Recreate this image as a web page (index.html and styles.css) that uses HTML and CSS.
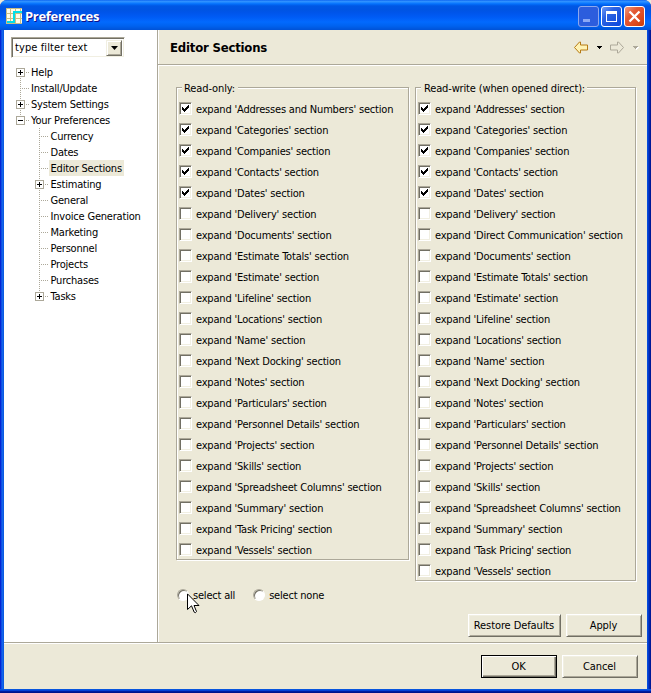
FILE: index.html
```
<!DOCTYPE html>
<html lang="en">
<head>
<meta charset="utf-8">
<title>Preferences</title>
<link rel="stylesheet" href="styles.css">
</head>
<body>
<svg class="defs" width="0" height="0" aria-hidden="true">
  <symbol id="check" viewBox="0 0 7 7"><path d="M0 2h1v1h1v1h1V3h1V2h1V1h1V0h1v3H6v1H5v1H4v1H3v1H2V6H1V5H0z"/></symbol>
  <symbol id="arrow" viewBox="0 0 14 13"><path d="M.5 6.500 5.500 1H6.500V4H13.500V9H6.500V12H5.500Z"/></symbol>
</svg>
<div class="window">
  <header class="titlebar">
    <svg class="appicon" width="16" height="16" viewBox="0 0 16 16" shape-rendering="crispEdges"><path fill="#fffce8" d="M0 0h16v16H0z"/><path fill="none" stroke="#c9bd84" d="M.5 0v16M4.500 0v16M9.500 0v16M14.500 0v16M0 .5h16M0 5.500h16M0 10.500h16M0 15.500h16"/><path fill="none" stroke="#00dfe8" stroke-width="2" d="M1 14h7V4h8"/></svg>
    <h1>Preferences</h1>
    <div class="caption">
      <span class="cap min"><svg width="21" height="21"><path fill="#8ca9f5" d="M5 13h7v3H5z"/></svg></span>
      <span class="cap max"><svg width="21" height="21"><path fill="#fff" fill-rule="evenodd" d="M5 5h11v11H5zM6 8v7h9V8z"/></svg></span>
      <span class="cap close"><svg width="21" height="21"><path stroke="#fff" stroke-width="2.300" d="m5.500 5.500 10 10m0-10-10 10"/></svg></span>
    </div>
  </header>
  <main class="body">
    <nav class="side">
      <div class="combo"><span>type filter text</span><b class="drop"><svg width="7" height="4"><path d="M0 0h7L3.500 4z"/></svg></b></div>
      <ul class="tree">
        <li class="plus"><span>Help</span></li>
        <li><span>Install/Update</span></li>
        <li class="plus"><span>System Settings</span></li>
        <li class="minus last"><span>Your Preferences</span>
          <ul>
            <li><span>Currency</span></li>
            <li><span>Dates</span></li>
            <li><span class="selected">Editor Sections</span></li>
            <li class="plus"><span>Estimating</span></li>
            <li><span>General</span></li>
            <li><span>Invoice Generation</span></li>
            <li><span>Marketing</span></li>
            <li><span>Personnel</span></li>
            <li><span>Projects</span></li>
            <li><span>Purchases</span></li>
            <li class="plus last"><span>Tasks</span></li>
          </ul>
        </li>
      </ul>
    </nav>
    <section class="page">
      <div class="pagehead">
        <h2>Editor Sections</h2>
        <div class="history">
          <svg class="back" width="14" height="13"><use href="#arrow"/></svg>
          <svg class="caret" width="5" height="3"><path d="M0 0h5v1H4v1H3v1H2V2H1V1H0z"/></svg>
          <svg class="forward" width="14" height="13"><use href="#arrow"/></svg>
          <svg class="caret off" width="6" height="4"><path fill="#fff" d="M1 1h5v1H5v1H4v1H3V3H2V2H1z"/><path d="M0 0h5v1H4v1H3v1H2V2H1V1H0z"/></svg>
        </div>
      </div>
      <div class="groups">
        <div class="group first">
          <h3>Read-only:</h3>
          <label><i><svg><use href="#check"/></svg></i>expand 'Addresses and Numbers' section</label>
          <label><i><svg><use href="#check"/></svg></i>expand 'Categories' section</label>
          <label><i><svg><use href="#check"/></svg></i>expand 'Companies' section</label>
          <label><i><svg><use href="#check"/></svg></i>expand 'Contacts' section</label>
          <label><i><svg><use href="#check"/></svg></i>expand 'Dates' section</label>
          <label><i></i>expand 'Delivery' section</label>
          <label><i></i>expand 'Documents' section</label>
          <label><i></i>expand 'Estimate Totals' section</label>
          <label><i></i>expand 'Estimate' section</label>
          <label><i></i>expand 'Lifeline' section</label>
          <label><i></i>expand 'Locations' section</label>
          <label><i></i>expand 'Name' section</label>
          <label><i></i>expand 'Next Docking' section</label>
          <label><i></i>expand 'Notes' section</label>
          <label><i></i>expand 'Particulars' section</label>
          <label><i></i>expand 'Personnel Details' section</label>
          <label><i></i>expand 'Projects' section</label>
          <label><i></i>expand 'Skills' section</label>
          <label><i></i>expand 'Spreadsheet Columns' section</label>
          <label><i></i>expand 'Summary' section</label>
          <label><i></i>expand 'Task Pricing' section</label>
          <label><i></i>expand 'Vessels' section</label>
        </div>
        <div class="group second">
          <h3>Read-write (when opened direct):</h3>
          <label><i><svg><use href="#check"/></svg></i>expand 'Addresses' section</label>
          <label><i><svg><use href="#check"/></svg></i>expand 'Categories' section</label>
          <label><i><svg><use href="#check"/></svg></i>expand 'Companies' section</label>
          <label><i><svg><use href="#check"/></svg></i>expand 'Contacts' section</label>
          <label><i><svg><use href="#check"/></svg></i>expand 'Dates' section</label>
          <label><i></i>expand 'Delivery' section</label>
          <label><i></i>expand 'Direct Communication' section</label>
          <label><i></i>expand 'Documents' section</label>
          <label><i></i>expand 'Estimate Totals' section</label>
          <label><i></i>expand 'Estimate' section</label>
          <label><i></i>expand 'Lifeline' section</label>
          <label><i></i>expand 'Locations' section</label>
          <label><i></i>expand 'Name' section</label>
          <label><i></i>expand 'Next Docking' section</label>
          <label><i></i>expand 'Notes' section</label>
          <label><i></i>expand 'Particulars' section</label>
          <label><i></i>expand 'Personnel Details' section</label>
          <label><i></i>expand 'Projects' section</label>
          <label><i></i>expand 'Skills' section</label>
          <label><i></i>expand 'Spreadsheet Columns' section</label>
          <label><i></i>expand 'Summary' section</label>
          <label><i></i>expand 'Task Pricing' section</label>
          <label><i></i>expand 'Vessels' section</label>
        </div>
      </div>
      <div class="radios">
        <label class="all"><i></i>select all
          <svg class="pointer" width="13" height="21" viewBox="0 0 13 21"><path fill="#fff" stroke="#000" d="M.5.900V16.500L4.500 12.800 7.200 19.200Q8.500 20.500 9.500 18.500L7 12.500H12Z"/></svg>
        </label>
        <label><i></i>select none</label>
      </div>
      <div class="pagebuttons"><button class="wide">Restore Defaults</button><button>Apply</button></div>
    </section>
  </main>
  <footer><button class="default">OK</button><button>Cancel</button></footer>
</div>
</body>
</html>
```

FILE: styles.css
```
*, *::before, *::after { box-sizing: border-box; }
body { margin: 0; background: #ece9d8; color: #000; font: 11px/16px "DejaVu Sans Condensed", "DejaVu Sans", sans-serif; font-stretch: condensed; letter-spacing: -0.2px; }
h1, h2, h3, ul { margin: 0; padding: 0; }
svg { display: block; }
.defs { position: absolute; }
.window { width: 651px; height: 693px; display: flex; flex-direction: column; padding: 0 4px 4px; border-radius: 7px 7px 0 0; background: linear-gradient(90deg, #0019cf 0, #0831d9 1px, #166aee 2px, #0855dd 4px, #0855dd 647px, #0441d8 648px, #001da0 650px, #00138c 651px); overflow: hidden; box-shadow: inset 0 -1px #00138c, inset 0 -2px #001da0, inset 0 -3px #0441d8, inset 0 -4px #0855dd; }
.titlebar { height: 30px; flex: none; display: flex; align-items: flex-start; margin: 0 -4px; padding: 6px 6px 0 6px; background: linear-gradient(#0058ee 0, #3593ff 1px, #288eff 2px, #127dff 3px, #036ffc 4px, #0262ee 5px, #0057e5 6px, #0054e3 10px, #0055eb 13px, #005bf5 17px, #026afe 22px, #0062ef 26px, #0052d6 30px); }
.appicon { margin: 2px 3px 0 0; }
h1 { color: #fff; font: bold 13px/21px "Open Sans", sans-serif; letter-spacing: -0.3px; text-shadow: 1px 1px #0f1089; }
.caption { margin-left: auto; display: flex; gap: 2px; }
.cap { width: 21px; height: 21px; border: 1px solid #fff; border-radius: 3px; background: linear-gradient(135deg, #6f9af5 0%, #2c63e4 35%, #1c55dd 65%, #0a49e0 100%); }
.cap svg { margin: -1px; }
.cap.min { border-color: #8da8ed; background: #2c5ddd; }
.cap.close { background: linear-gradient(135deg, #f09a80 0%, #e35a35 35%, #e04c22 65%, #c83c08 100%); }
.body { height: 612px; flex: none; display: flex; }
.side { width: 154px; background: #fff; padding: 7px 0 0 7px; }
.combo { width: 114px; height: 21px; display: flex; justify-content: space-between; border: 1px solid; border-color: #aca899 #fff #fff #aca899; box-shadow: inset 1px 1px #716f64, inset -1px -1px #f1efe2; padding: 1px 2px 2px 3px; letter-spacing: 0.1px; }
.combo span { padding-top: 1px; }
.drop { width: 16px; height: 16px; margin-top: 1px; display: grid; place-items: center; background: #ece9d8; border: 1px solid; border-color: #f1efe2 #716f64 #716f64 #f1efe2; box-shadow: inset 1px 1px #fff, inset -1px -1px #aca899; }
.tree { margin-top: 6px; list-style: none; }
.tree ul { list-style: none; padding-left: 19px; }
.tree li { position: relative; padding-left: 18px; }
.tree li li { padding-left: 19px; }
.tree > li.last { padding-left: 0; }
.tree > li.last > span { margin-left: 18px; }
.tree span { display: inline-block; height: 16px; padding: 1px 2px 0; vertical-align: top; }
.tree li::before { content: ""; position: absolute; left: 9px; top: 0; bottom: 0; width: 10px; background: repeating-linear-gradient(#aca899 0 1px, transparent 1px 2px) 0 0 / 1px 100% no-repeat, repeating-linear-gradient(90deg, #aca899 0 1px, transparent 1px 2px) 0 8px / 100% 1px no-repeat; }
.tree > li:first-child::before { clip-path: inset(8px 0 0); }
.tree li.last::before { height: 9px; bottom: auto; }
.plus::after, .minus::after { content: ""; position: absolute; left: 5px; top: 4px; width: 9px; height: 9px; border: 1px solid #aca899; background: linear-gradient(#000, #000) 1px 3px / 5px 1px no-repeat, linear-gradient(#000, #000) 3px 1px / 1px 5px no-repeat, #fff; }
.minus::after { background: linear-gradient(#000, #000) 1px 3px / 5px 1px no-repeat, #fff; }
.tree li li span { padding-left: 1.500px; }
.tree .selected { background: #ece9d8; width: 75px; white-space: nowrap; }
.page { width: 490px; background: #ece9d8; border-left: 1px solid #aca899; box-shadow: inset 1px 0 #fff; display: flex; flex-direction: column; margin-left: -1px; }
.pagehead { height: 36px; display: flex; align-items: center; justify-content: space-between; padding: 0 8px 0 12px; border-bottom: 1px solid #fff; box-shadow: inset 0 -1px #aca899; }
h2 { font-size: 13px; line-height: 20px; padding-top: 1px; font-weight: bold; letter-spacing: -0.2px; }
.history { display: flex; align-items: center; }
.back { fill: #fff3b5; stroke: #b67a13; margin-right: 9px; }
.forward { fill: none; stroke: #aca899; margin: 0 9px 0 8px; transform: scaleX(-1); }
.caret.off { fill: #aca899; }
.groups { display: flex; align-items: flex-start; gap: 6px; padding: 21px 0 0 18px; }
.group { width: 233px; height: 473px; border: 1px solid #aca899; box-shadow: inset 1px 1px #fff, 1px 1px #fff; padding-left: 2px; }
.group.second { width: 221px; height: 494px; }
h3 { width: max-content; height: 16px; margin: -8px 0 3px 3px; padding: 1px 3px 0 2px; background: #ece9d8; font: inherit; letter-spacing: -0.1px; }
.second h3 { padding: 1px 2px 0 3px; letter-spacing: -0.15px; }
label { display: flex; align-items: center; }
.group label { height: 21px; gap: 4px; padding-top: 1px; white-space: nowrap; letter-spacing: -0.19px; }
.group i { width: 13px; height: 13px; flex: none; margin-top: -4px; background: #fff; border: 1px solid; border-color: #aca899 #fff #fff #aca899; box-shadow: inset 1px 1px #716f64, inset -1px -1px #f1efe2; padding: 2px; }
i svg { width: 7px; height: 7px; }
.radios { display: flex; gap: 18px; margin: 7px 0 0 19px; height: 16px; }
.radios label { position: relative; gap: 4px; white-space: nowrap; }
.radios i { width: 12px; height: 12px; margin-top: -2px; border-radius: 50%; background: #fff; border: 1px solid; border-color: #aca899 #fff #fff #aca899; box-shadow: inset 1px 1px #716f64; }
.pointer { position: absolute; left: 10px; top: 5px; }
.pagebuttons { display: flex; gap: 5px; justify-content: flex-end; margin: 10px 5px 0 0; }
button { width: 76px; height: 23px; padding: 0 1px 0 0; font: inherit; letter-spacing: -0.1px; color: #000; background: #ece9d8; border: 1px solid; border-color: #fff #716f64 #716f64 #fff; border-radius: 0; box-shadow: inset 1px 1px #f1efe2, inset -1px -1px #aca899; }
.wide { width: 93px; }
.default { border-color: #000; box-shadow: inset 1px 1px #fff, inset -1px -1px #716f64, inset -2px -2px #aca899; }
footer { flex: 1; display: flex; justify-content: flex-end; gap: 5px; padding: 12px 9px 0 0; background: #ece9d8; border-top: 1px solid #aca899; box-shadow: inset 0 1px #fff; }
```
